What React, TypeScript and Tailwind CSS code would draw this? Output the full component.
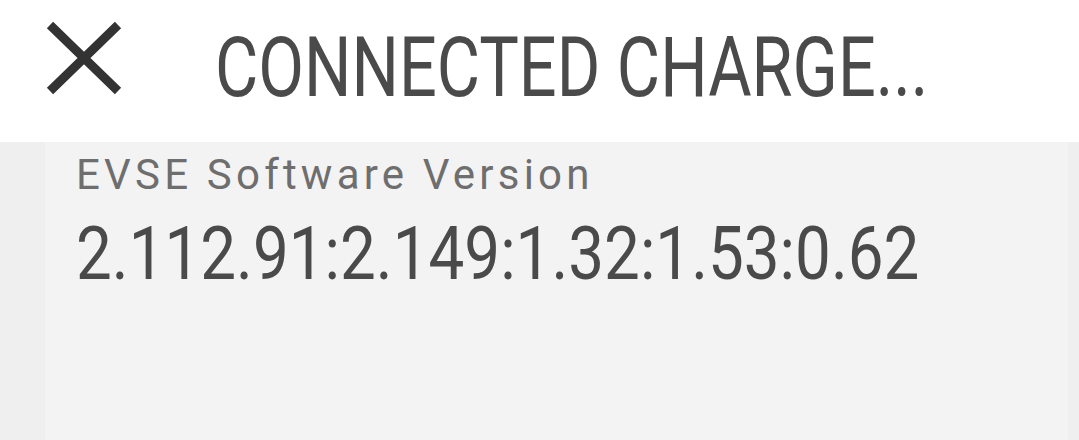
import React from "react";

export default function App() {
  return (
    <div className="w-[1079px] h-[440px] overflow-hidden bg-[#efefef] flex flex-col">
      <header className="h-[142px] shrink-0 bg-white flex items-start">
        <div className="ml-[44px] mt-[19px] w-[80px] h-[78px] shrink-0">
          <svg width="80" height="78" viewBox="0 0 80 78" aria-label="close">
            <path d="M6 6 L74 72 M74 6 L6 72" stroke="#333333" strokeWidth="9" strokeLinecap="butt" fill="none" />
          </svg>
        </div>
        <div className="ml-[91px] mt-[18px] overflow-visible">
          <h1 className="origin-left scale-x-[0.792] whitespace-nowrap text-[84px] leading-[100px] text-[#4a4a4a] font-normal font-['Roboto',sans-serif]">
            CONNECTED CHARGE...
          </h1>
        </div>
      </header>
      <main className="flex-1 px-[45px] flex">
        <section className="flex-1 bg-[#f3f3f3] pl-[31px] pt-[8px]">
          <div className="text-[42px] leading-[50px] tracking-[0.1em] text-[#6e6e6e] font-['Roboto',sans-serif] whitespace-nowrap">
            EVSE Software Version
          </div>
          <div className="mt-[8px] origin-left scale-x-[0.85] text-[75px] leading-[90px] text-[#4a4a4a] font-['Roboto',sans-serif] whitespace-nowrap">
            2.112.91:2.149:1.32:1.53:0.62
          </div>
        </section>
      </main>
    </div>
  );
}
